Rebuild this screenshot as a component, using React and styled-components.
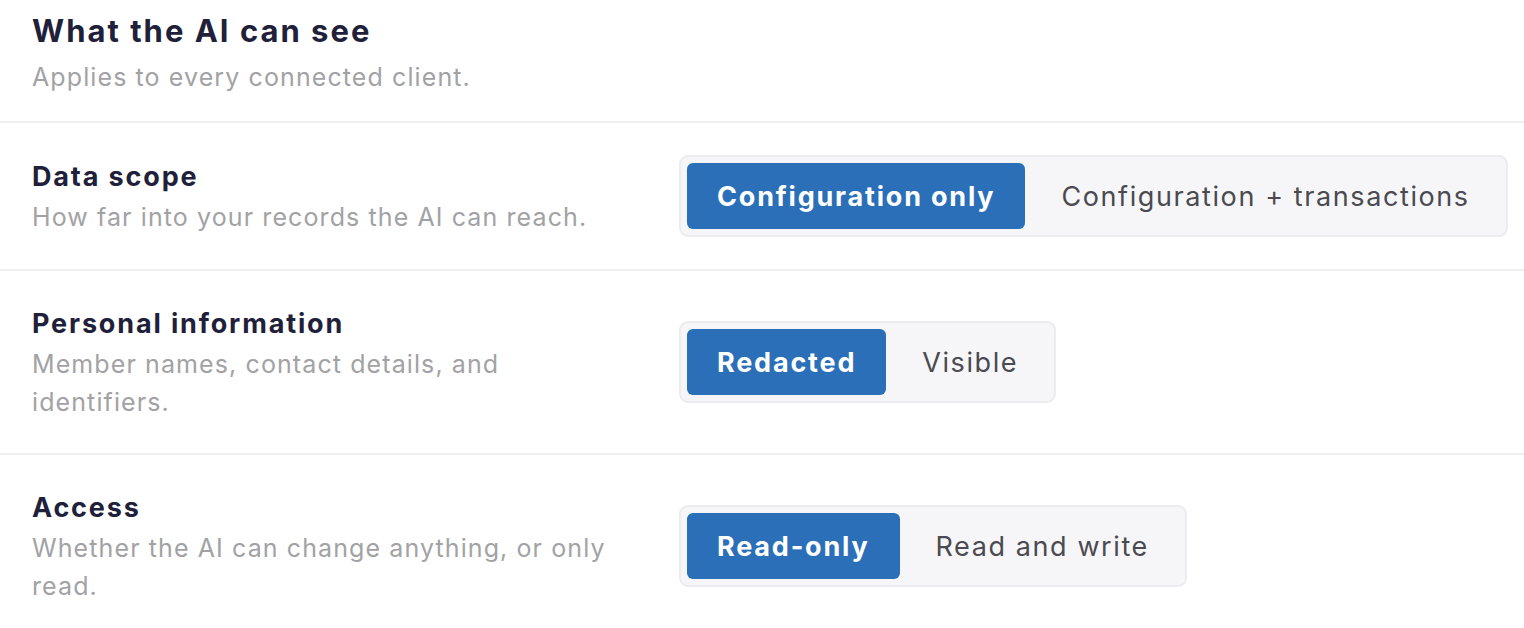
import React, { useState } from 'react';
import styled, { createGlobalStyle } from 'styled-components';

const GlobalStyle = createGlobalStyle`
  html, body { margin: 0; padding: 0; background: #ffffff; }
  body { font-family: "Inter", "Noto Sans", sans-serif; -webkit-font-smoothing: antialiased; }
  * { box-sizing: border-box; }
`;

const Page = styled.div`
  display: flex;
  flex-direction: column;
  width: 100%;
`;

const Header = styled.header`
  display: flex;
  flex-direction: column;
  gap: 7px;
  padding: 11px 32px 25px;
  border-bottom: 2px solid #efeff1;
`;

const Title = styled.h1`
  margin: 0;
  font-size: 31px;
  line-height: 40px;
  font-weight: 700;
  letter-spacing: 2px;
  color: #1f2039;
`;

const Subtitle = styled.p`
  margin: 0;
  font-size: 25px;
  line-height: 38px;
  font-weight: 400;
  letter-spacing: 1.1px;
  color: #a2a2a5;
`;

const SettingRow = styled.section`
  display: grid;
  grid-template-columns: 600px auto;
  column-gap: 47px;
  align-items: center;
  padding: 32px 32px;
  border-bottom: 2px solid #efeff1;
`;

const LabelBlock = styled.div`
  display: flex;
  flex-direction: column;
`;

const Label = styled.h2`
  margin: 0;
  font-size: 27px;
  line-height: 42px;
  font-weight: 700;
  letter-spacing: 1.85px;
  color: #1f2039;
`;

const Description = styled.p`
  margin: 0;
  font-size: 25px;
  line-height: 38px;
  font-weight: 400;
  letter-spacing: 1.1px;
  color: #a2a2a5;
`;

const Segmented = styled.div`
  justify-self: start;
  display: flex;
  gap: 6px;
  padding: 6px;
  background: #f6f6f8;
  border: 2px solid #ececef;
  border-radius: 9px;
`;

const Segment = styled.button`
  height: 66px;
  padding: 0 30px;
  border: none;
  border-radius: 6px;
  font-family: inherit;
  font-size: 27px;
  white-space: nowrap;
  cursor: pointer;
  background: ${p => (p.$active ? '#2a6fb7' : 'transparent')};
  color: ${p => (p.$active ? '#ffffff' : '#4a4a50')};
  font-weight: ${p => (p.$active ? 700 : 400)};
  letter-spacing: ${p => (p.$active ? '1.8px' : '1.6px')};
`;

const settings = [
  {
    key: 'scope',
    label: 'Data scope',
    description: 'How far into your records the AI can reach.',
    options: ['Configuration only', 'Configuration + transactions'],
  },
  {
    key: 'pii',
    label: 'Personal information',
    description: 'Member names, contact details, and identifiers.',
    options: ['Redacted', 'Visible'],
  },
  {
    key: 'access',
    label: 'Access',
    description: 'Whether the AI can change anything, or only read.',
    options: ['Read-only', 'Read and write'],
  },
];

function Setting({ label, description, options }) {
  const [value, setValue] = useState(options[0]);
  return (
    <SettingRow>
      <LabelBlock>
        <Label>{label}</Label>
        <Description>{description}</Description>
      </LabelBlock>
      <Segmented role="radiogroup">
        {options.map(o => (
          <Segment key={o} $active={o === value} onClick={() => setValue(o)}>
            {o}
          </Segment>
        ))}
      </Segmented>
    </SettingRow>
  );
}

export default function App() {
  return (
    <Page>
      <GlobalStyle />
      <Header>
        <Title>What the AI can see</Title>
        <Subtitle>Applies to every connected client.</Subtitle>
      </Header>
      {settings.map(s => (
        <Setting key={s.key} {...s} />
      ))}
    </Page>
  );
}
